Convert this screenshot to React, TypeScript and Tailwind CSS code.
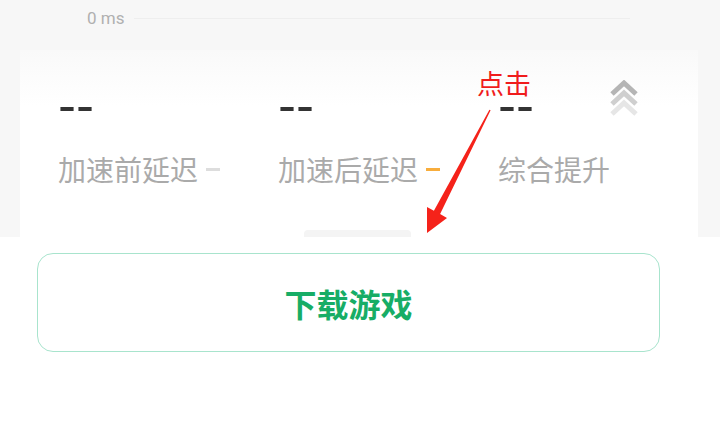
export default function App() {
  const cjk = { fontFamily: '"Noto Sans CJK SC", "Noto Sans", sans-serif' }
  return (
    <div className="relative w-[720px] h-[428px] overflow-hidden bg-white" style={cjk}>
      <div className="h-[237px] bg-[#f7f7f7] flex flex-col">
        <div className="h-[50px] pt-[7px] pl-[87px] pr-[90px] flex items-start gap-[10px]">
          <span className="text-[17px] leading-[22px] text-[#b0b0b0]" style={{ fontFamily: "Roboto, sans-serif" }}>
            0 ms
          </span>
          <div className="flex-1 h-px mt-[11px] bg-[#eeeeee]" />
        </div>
        <div className="relative flex-1 ml-[20px] mr-[22px] bg-gradient-to-b from-[#f9f9f9] to-white to-[30%] pl-[38px]">
          <div className="grid grid-cols-[220px_220px_112px_28px] pt-[30px]">
            <Stat label="加速前延迟" tick="bg-[#dddddd]" />
            <Stat label="加速后延迟" tick="bg-[#f8ad3c]" />
            <Stat label="综合提升" />
            <svg width="28" height="38" viewBox="0 0 28 38">
              <path d="M2 14 L14 3 L26 14" fill="none" stroke="#b5b5b5" strokeWidth="5" />
              <path d="M2 24 L14 13 L26 24" fill="none" stroke="#cfcfcf" strokeWidth="5" />
              <path d="M2 34 L14 23 L26 34" fill="none" stroke="#e6e6e6" strokeWidth="5" />
            </svg>
          </div>
          <div className="absolute bottom-0 left-[284px] w-[107px] h-[7px] rounded-t-[4px] bg-[#f4f4f4]" />
        </div>
      </div>

      <div className="pt-[16px] pl-[37px]">
        <button className="w-[623px] h-[99px] rounded-[16px] border border-[#a8e4cd] bg-white flex items-center justify-center text-[32px] font-bold text-[#17ad66]">
          下载游戏
        </button>
      </div>

      <span className="absolute left-[477px] top-[63px] text-[27px] leading-[40px] text-[#f01c1c]">点击</span>
      <svg className="absolute left-0 top-0" width="720" height="428">
        <polygon
          points="490.6,110.3 440.1,214 447,218 427,233 427,207 433.9,210.8 489.4,109.7"
          fill="#f5221a"
        />
      </svg>
    </div>
  )
}

function Stat({ label, tick }: { label: string; tick?: string }) {
  return (
    <div className="flex flex-col">
      <span
        className="h-[40px] mt-[6px] text-[50px] leading-[40px] text-[#333333]"
        style={{ fontFamily: '"DejaVu Sans", sans-serif' }}
      >
        --
      </span>
      <div className="mt-[25px] flex items-center gap-[8px]">
        <span className="text-[28px] leading-[36px] text-[#aaaaaa]">{label}</span>
        {tick && <span className={`w-[14px] h-[3px] ${tick}`} />}
      </div>
    </div>
  )
}
